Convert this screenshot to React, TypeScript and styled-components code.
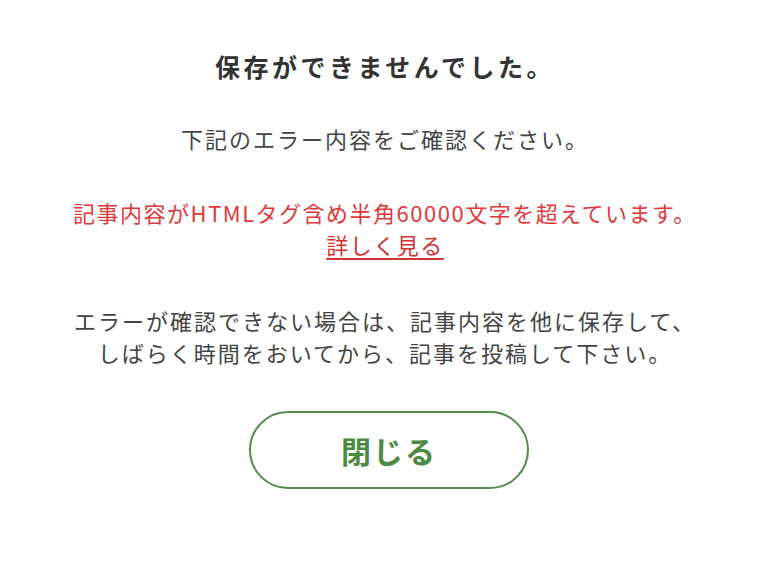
import React from 'react';
import styled, { createGlobalStyle } from 'styled-components';

const GlobalStyle = createGlobalStyle`
  html, body {
    margin: 0;
    padding: 0;
    background: #ffffff;
  }

  body {
    font-family: "Noto Sans CJK JP", "Noto Sans", sans-serif;
    color: #3c3c3c;
  }
`;

const Dialog = styled.div`
  width: 759px;
  height: 568px;
  display: flex;
  flex-direction: column;
  align-items: center;
  box-sizing: border-box;
  padding: 48px 0 0 11px;
  text-align: center;
`;

const Title = styled.h1`
  margin: 0;
  font-size: 25px;
  line-height: 36px;
  font-weight: 700;
  letter-spacing: 3.5px;
  color: #333333;
`;

const Message = styled.p<{ $gap: number; $tone?: 'normal' | 'error' }>`
  margin: ${p => p.$gap}px 0 0 0;
  font-size: 22px;
  line-height: 32px;
  letter-spacing: ${p => (p.$tone === 'error' ? '1.5px' : '2px')};
  color: ${p => (p.$tone === 'error' ? '#e0393b' : '#444444')};
`;

const DetailLink = styled.a`
  color: #d23334;
  text-decoration: underline;
  text-underline-offset: 4px;
  text-decoration-thickness: 1.5px;
  cursor: pointer;
`;

const CloseButton = styled.button`
  margin: 43px 0 0 8px;
  width: 280px;
  height: 78px;
  border: 2px solid #538d4b;
  border-radius: 40px;
  background: #ffffff;
  color: #4a8a42;
  font-family: "Noto Sans CJK JP", "Noto Sans", sans-serif;
  font-size: 30px;
  font-weight: 700;
  letter-spacing: 2px;
  cursor: pointer;
`;

const App = () => {
  return (
    <>
      <GlobalStyle />
      <Dialog>
        <Title>保存ができませんでした。</Title>
        <Message $gap={38}>下記のエラー内容をご確認ください。</Message>
        <Message $gap={42} $tone="error">
          記事内容がHTMLタグ含め半角60000文字を超えています。
          <br />
          <DetailLink>詳しく見る</DetailLink>
        </Message>
        <Message $gap={44}>
          エラーが確認できない場合は、記事内容を他に保存して、
          <br />
          しばらく時間をおいてから、記事を投稿して下さい。
        </Message>
        <CloseButton>閉じる</CloseButton>
      </Dialog>
    </>
  );
};

export default App;
